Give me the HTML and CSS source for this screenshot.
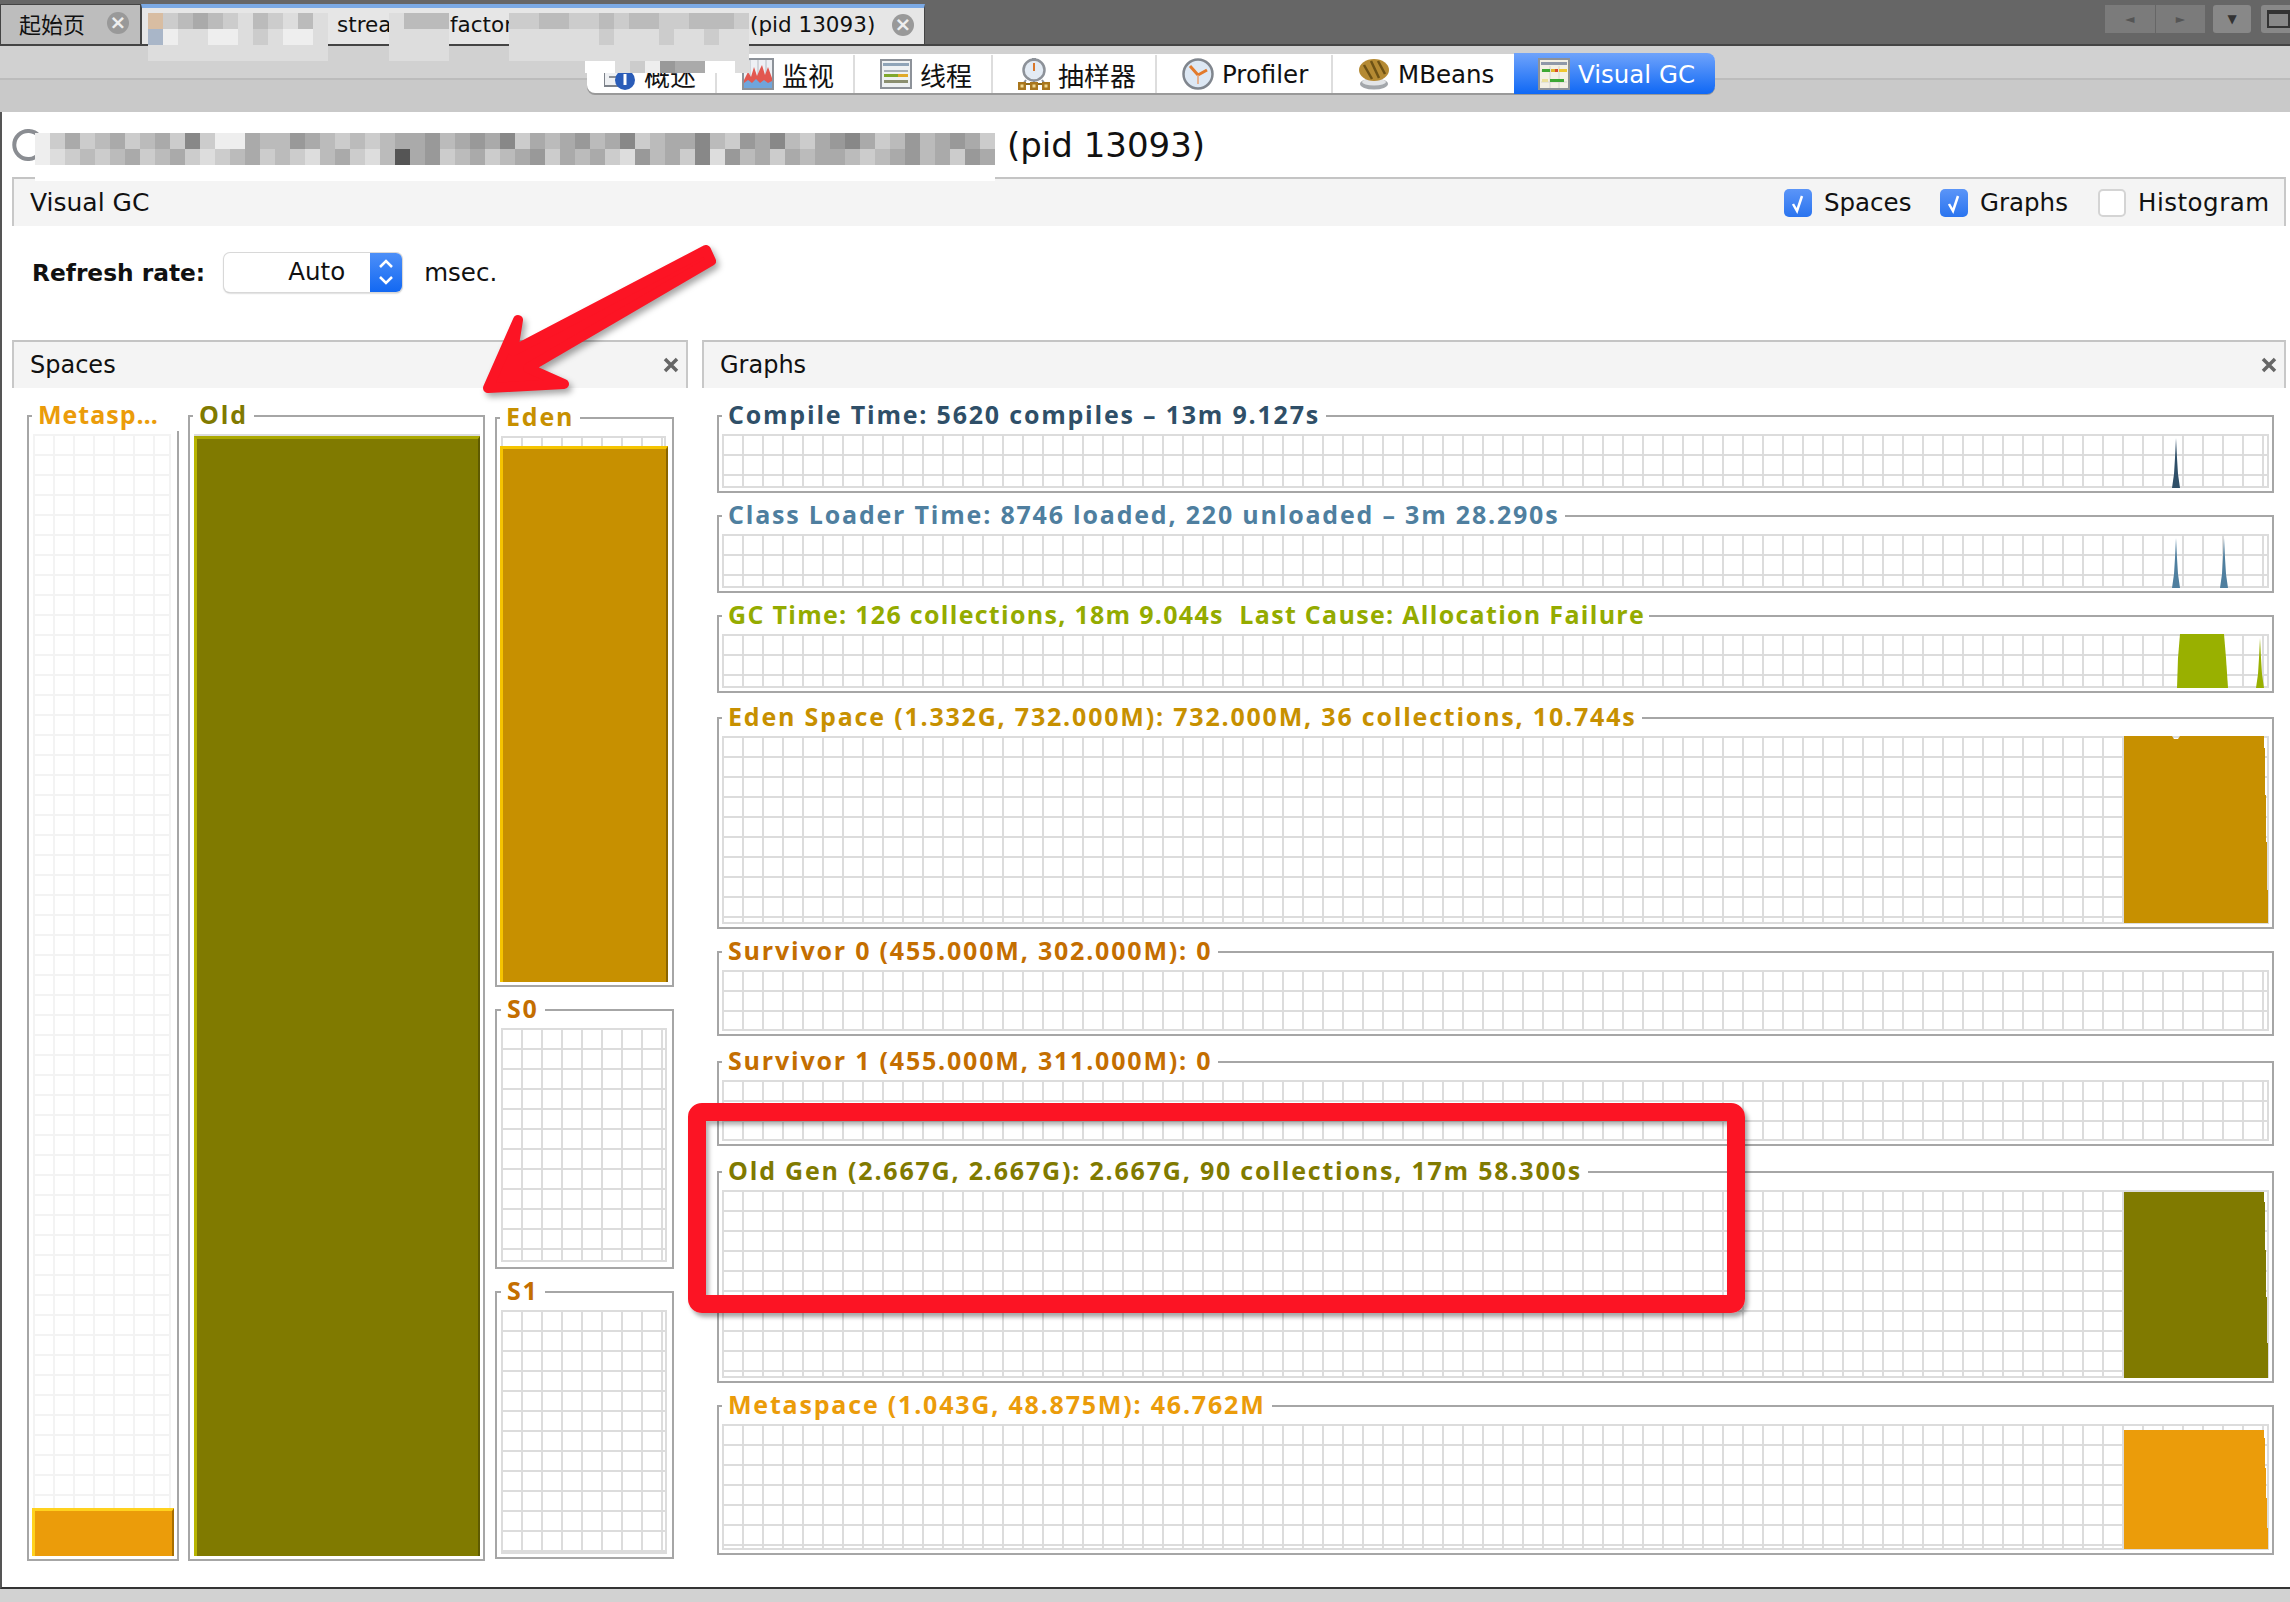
FILE: index.html
```html
<!DOCTYPE html>
<html lang="zh">
<head>
    <meta charset="UTF-8">
    <title>VisualVM - Visual GC</title>
    <link rel="stylesheet" href="styles.css">
</head>
<body>
    <!-- document tabs -->
    <div class="doc-bar">
        <div class="doc-tab">
            <span class="doc-label">起始页</span>
            <span class="doc-close">&times;</span>
        </div>
        <div class="doc-tab doc-tab-active">
            <span class="frag-stream">strea</span>
            <span class="frag-factory">factor</span>
            <span class="frag-pid">(pid 13093)</span>
            <span class="doc-close">&times;</span>
        </div>
        <div class="doc-nav">
            <div class="nav-pair">
                <span class="nav-btn">&#9668;</span>
                <span class="nav-btn">&#9658;</span>
            </div>
            <span class="nav-single">&#9660;</span>
            <span class="nav-window"><i></i></span>
        </div>
    </div>

    <!-- view tabs -->
    <div class="view-bar">
        <div class="view-tabs">
            <div class="view-tab view-tab-first">
                <svg class="tab-icon" viewBox="0 0 32 32"><rect x="0" y="3" width="24" height="25" fill="#eef0f3" stroke="#7d828a" stroke-width="2"/><rect x="5" y="18" width="9" height="2" fill="#8a8f96"/><circle cx="21" cy="22" r="10" fill="#2a5cb8"/><rect x="19.500" y="16" width="3" height="11" fill="#fff"/></svg>
                <span class="tab-cjk">概述</span>
            </div>
            <div class="view-tab">
                <svg class="tab-icon" viewBox="0 0 32 32"><rect x="1" y="1" width="30" height="30" fill="#eef0f4" stroke="#8d9299" stroke-width="2"/><path d="M8 2v28M16 2v28M24 2v28" stroke="#c8ccd2" stroke-width="1.500"/><path d="M2 22 L6 14 L9 19 L12 9 L15 18 L18 11 L20 7 L23 17 L26 9 L30 20 V30 H2Z" fill="#e2574f"/><path d="M2 30 V25 L6 22 L10 25 L14 21 L18 25 L22 22 L26 25 L30 23 V30Z" fill="#6fa5dc"/></svg>
                <span class="tab-cjk">监视</span>
            </div>
            <div class="view-tab">
                <svg class="tab-icon" viewBox="0 0 32 32"><rect x="1" y="2" width="30" height="28" fill="#eef1f3" stroke="#8d9299" stroke-width="2"/><rect x="3" y="5" width="26" height="3" fill="#8fa4b8"/><rect x="4" y="12" width="24" height="2" fill="#a9b0b8"/><rect x="4" y="16" width="14" height="3" fill="#7fa82e"/><rect x="18" y="16" width="10" height="3" fill="#e0a92a"/><rect x="4" y="22" width="24" height="3" fill="#8b8f70"/></svg>
                <span class="tab-cjk">线程</span>
            </div>
            <div class="view-tab">
                <svg class="tab-icon" viewBox="0 0 32 32"><circle cx="16" cy="12" r="10.500" fill="#e3ebf4" stroke="#8d9299" stroke-width="2.500"/><rect x="14" y="0" width="4" height="3" fill="#8d9299"/><path d="M16 5v8" stroke="#d9772b" stroke-width="2"/><path d="M5 26h22" stroke="#8a6a1f" stroke-width="2"/><path d="M8 22l-3 4M24 22l3 4M16 22v4" stroke="#8d9299" stroke-width="2"/><rect x="0" y="24" width="8" height="8" fill="#a9761c"/><rect x="12" y="24" width="8" height="8" fill="#a9761c"/><rect x="24" y="24" width="8" height="8" fill="#a9761c"/><rect x="2.500" y="26.500" width="3" height="3" fill="#f0d890"/><rect x="14.500" y="26.500" width="3" height="3" fill="#f0d890"/><rect x="26.500" y="26.500" width="3" height="3" fill="#f0d890"/></svg>
                <span class="tab-cjk">抽样器</span>
            </div>
            <div class="view-tab">
                <svg class="tab-icon" viewBox="0 0 32 32"><circle cx="16" cy="16" r="14.500" fill="#dde8f4" stroke="#80868e" stroke-width="2.500"/><path d="M16 17 L8 8 M16 17 L25 12" stroke="#e27a2c" stroke-width="3"/><path d="M16 17 V26" stroke="#e8a070" stroke-width="1.500"/></svg>
                <span>Profiler</span>
            </div>
            <div class="view-tab">
                <svg class="tab-icon" viewBox="0 0 32 32"><ellipse cx="16" cy="26" rx="14" ry="5.500" fill="#a3a7ab"/><ellipse cx="16" cy="24" rx="12" ry="3.500" fill="#e2e4e6"/><ellipse cx="16" cy="12" rx="15" ry="11" fill="#b58a33"/><path d="M6 7 L14 21 M13 3 L21 20 M20 3 L27 16" stroke="#6e5215" stroke-width="2.500"/></svg>
                <span>MBeans</span>
            </div>
            <div class="view-tab view-tab-active">
                <svg class="tab-icon" viewBox="0 0 32 32"><rect x="1" y="1" width="30" height="30" fill="#f3f0e4" stroke="#8d9299" stroke-width="2"/><rect x="3" y="4" width="26" height="3" fill="#8f98a8"/><path d="M12 8v22M21 8v22M3 13h26M3 24h26" stroke="#d6d6d0" stroke-width="1"/><rect x="4" y="11" width="8" height="3" fill="#3da834"/><rect x="13" y="11" width="4" height="3" fill="#e2b52c"/><rect x="17" y="11" width="3" height="3" fill="#d84a2a"/><rect x="21" y="11" width="8" height="3" fill="#f0c72e"/><rect x="4" y="21" width="6" height="3" fill="#eadf9a"/><rect x="12" y="21" width="14" height="3" fill="#3da834"/></svg>
                <span>Visual GC</span>
            </div>
        </div>
    </div>

    <div class="content">
        <div class="app-title">
            <svg class="spinner" viewBox="0 0 32 32"><path d="M27 7 A14 14 0 1 0 27 25" fill="none" stroke="#8a8d92" stroke-width="4"/></svg>
            <span>(pid 13093)</span>
        </div>

        <div class="options-bar">
            <span>Visual GC</span>
            <div class="options">
                <label class="option option-spaces"><span class="check check-on"><svg viewBox="0 0 28 28"><path d="M9 15l4 7 5-15" fill="none" stroke="#fff" stroke-width="2.500"/></svg></span>Spaces</label>
                <label class="option option-graphs"><span class="check check-on"><svg viewBox="0 0 28 28"><path d="M9 15l4 7 5-15" fill="none" stroke="#fff" stroke-width="2.500"/></svg></span>Graphs</label>
                <label class="option option-histogram"><span class="check"></span>Histogram</label>
            </div>
        </div>

        <div class="refresh-row">
            <b>Refresh rate:</b>
            <div class="spinner-select">
                <span class="select-value">Auto</span>
                <span class="select-arrows"><svg viewBox="0 0 32 38"><path d="M10 14l6-6 6 6M10 24l6 6 6-6" fill="none" stroke="#fff" stroke-width="2.500"/></svg></span>
            </div>
            <span>msec.</span>
        </div>

        <div class="panes">
            <section class="pane pane-spaces">
                <div class="pane-head">
                    <span>Spaces</span>
                    <svg class="pane-close" viewBox="0 0 16 16"><path d="M2 2l12 12M14 2L2 14" stroke="#666" stroke-width="3.500"/></svg>
                </div>
                <div class="spaces">
                    <fieldset class="box box-meta">
                        <legend class="c-meta legend-cut">Metasp&hellip;</legend>
                        <div class="plot plot-faint">
                            <div class="level level-meta"></div>
                        </div>
                    </fieldset>
                    <fieldset class="box box-old">
                        <legend class="c-old">Old</legend>
                        <div class="plot">
                            <div class="level level-old"></div>
                        </div>
                    </fieldset>
                    <div class="young">
                        <fieldset class="box box-eden">
                            <legend class="c-eden">Eden</legend>
                            <div class="plot">
                                <div class="level level-eden"></div>
                            </div>
                        </fieldset>
                        <fieldset class="box box-s0">
                            <legend class="c-surv">S0</legend>
                            <div class="plot"></div>
                        </fieldset>
                        <fieldset class="box box-s1">
                            <legend class="c-surv">S1</legend>
                            <div class="plot"></div>
                        </fieldset>
                    </div>
                </div>
            </section>

            <section class="pane pane-graphs">
                <div class="pane-head">
                    <span>Graphs</span>
                    <svg class="pane-close" viewBox="0 0 16 16"><path d="M2 2l12 12M14 2L2 14" stroke="#666" stroke-width="3.500"/></svg>
                </div>
                <div class="graphs">
                    <fieldset class="box graph">
                        <legend class="c-compile">Compile Time: 5620 compiles &ndash; 13m 9.127s</legend>
                        <div class="plot plot-s">
                            <svg class="trace" viewBox="0 0 1545 54"><polygon fill="#2f4f68" points="1454,4 1453,24 1452,40 1450,54 1458,54 1456,40 1455,24"/></svg>
                        </div>
                    </fieldset>
                    <fieldset class="box graph">
                        <legend class="c-class">Class Loader Time: 8746 loaded, 220 unloaded &ndash; 3m 28.290s</legend>
                        <div class="plot plot-s">
                            <svg class="trace" viewBox="0 0 1545 54"><polygon fill="#4f7f9f" points="1454,4 1453,24 1452,40 1450,54 1458,54 1456,40 1455,24"/><polygon fill="#4f7f9f" points="1502,4 1501,24 1500,40 1498,54 1506,54 1504,40 1503,24"/></svg>
                        </div>
                    </fieldset>
                    <fieldset class="box graph">
                        <legend class="c-gc legend-tight">GC Time: 126 collections, 18m 9.044s &nbsp;Last Cause: Allocation Failure</legend>
                        <div class="plot plot-s">
                            <svg class="trace" viewBox="0 0 1545 54"><polygon fill="#99b000" points="1458,0 1502,0 1504,24 1506,54 1455,54 1456,24"/><polygon fill="#99b000" points="1538,4 1537,24 1536,40 1534,54 1542,54 1540,40 1539,24"/></svg>
                        </div>
                    </fieldset>
                    <fieldset class="box graph graph-eden">
                        <legend class="c-eden">Eden Space (1.332G, 732.000M): 732.000M, 36 collections, 10.744s</legend>
                        <div class="plot plot-l">
                            <svg class="trace" viewBox="0 0 1545 188"><polygon fill="#c79000" points="1402,0 1450,0 1452,3 1456,3 1458,0 1542,0 1542,12 1543,12 1543,59 1544,59 1544,106 1545,106 1545,154 1546,154 1546,187 1402,187"/></svg>
                        </div>
                    </fieldset>
                    <fieldset class="box graph">
                        <legend class="c-surv">Survivor 0 (455.000M, 302.000M): 0</legend>
                        <div class="plot plot-m"></div>
                    </fieldset>
                    <fieldset class="box graph graph-s1">
                        <legend class="c-surv">Survivor 1 (455.000M, 311.000M): 0</legend>
                        <div class="plot plot-m"></div>
                    </fieldset>
                    <fieldset class="box graph graph-old">
                        <legend class="c-old">Old Gen (2.667G, 2.667G): 2.667G, 90 collections, 17m 58.300s</legend>
                        <div class="plot plot-l">
                            <svg class="trace" viewBox="0 0 1545 188"><polygon fill="#807a00" points="1402,2 1542,2 1542,12 1543,12 1543,60 1544,60 1544,107 1545,107 1545,153 1546,153 1546,188 1402,188"/></svg>
                        </div>
                    </fieldset>
                    <fieldset class="box graph">
                        <legend class="c-meta">Metaspace (1.043G, 48.875M): 46.762M</legend>
                        <div class="plot plot-meta">
                            <svg class="trace" viewBox="0 0 1545 126"><polygon fill="#eb9c0a" points="1402,6 1542,6 1542,14 1543,14 1543,44 1544,44 1544,74 1545,74 1545,104 1546,104 1546,125 1402,125"/></svg>
                        </div>
                    </fieldset>
                </div>
            </section>
        </div>
    </div>
    <div class="status-bar"></div>

    <!-- pixelated patches over the hidden names -->
    <div class="mosaic mosaic-icon" data-rows="Xcbabcdbcdbd|Yeddeedcdeed|dddddddddddd"></div>
    <div class="mosaic mosaic-b" data-rows="dbbb|dddd|dddd"></div>
    <div class="mosaic mosaic-c" data-rows="ccbbccbcbbccbbbc|ddddddcdddcddcdd|dddddddddddddddd"></div>
    <div class="mosaic mosaic-d" data-rows="ffdce9aaffd"></div>
    <div class="mosaic mosaic-title" data-rows="ecacbacbac8ceeabb9abcbcbaa9ba9a8caba9ba8cbaa8bc9a8bca98acb9ba9ac|edcbcbacbacdcbacbcdbacdb5a9cbacba9cabacd9bac8d9bacabaabcba9bac9a|ffffffffffffffffffffffffffffffffffffffffffffffffffffffffffffffff"></div>

    <!-- annotations drawn on top of the screenshot -->
    <svg class="note-arrow" viewBox="0 0 260 170">
        <polygon fill="#fc1424" stroke="#fc1424" stroke-width="10" stroke-linejoin="round" points="238,12 243,23 60,130 96,146 20,150 50,82 45,113"/>
    </svg>
    <div class="note-box"></div>

    <script src="mosaic.js"></script>
</body>
</html>
```

FILE: mosaic.js
```js
// Build the pixelated patches from rows of gray levels (one hex digit per cell)
document.querySelectorAll('.mosaic').forEach(function(patch) {
    patch.dataset.rows.split('|').forEach(function(row) {
        const rowEl = document.createElement('div');
        rowEl.className = 'mosaic-row';
        row.split('').forEach(function(level) {
            const cell = document.createElement('span');
            if (level === 'X') {
                cell.style.background = '#d8bda2';
            } else if (level === 'Y') {
                cell.style.background = '#a9b6c8';
            } else {
                const gray = parseInt(level, 16) * 17;
                cell.style.background = `rgb(${gray}, ${gray}, ${gray})`;
            }
            rowEl.appendChild(cell);
        });
        patch.appendChild(rowEl);
    });
});
```

FILE: styles.css
```css
* {
    box-sizing: border-box;
}

body {
    margin: 0;
    width: 2290px;
    height: 1602px;
    overflow: hidden;
    background-color: #d2d2d2;
    font-family: 'DejaVu Sans', 'Noto Sans CJK SC', sans-serif;
    color: #111;
}

/* document tabs */
.doc-bar {
    display: flex;
    height: 46px;
    padding-top: 4px;
    background-color: #666;
    border-bottom: 2px solid #444;
    font-size: 21.500px;
}

.doc-tab {
    display: flex;
    align-items: center;
    width: 141px;
    height: 40px;
    padding: 0 0 3px 18px;
    background-color: #bdbdbd;
    border: 1px solid #444;
    border-bottom: none;
}

.doc-label {
    width: 88px;
    font-size: 22px;
}

.doc-close {
    width: 22px;
    height: 22px;
    border-radius: 50%;
    background-color: #999;
    color: #eee;
    font-size: 20px;
    font-weight: bold;
    line-height: 21px;
    text-align: center;
}

.doc-tab-active {
    position: relative;
    width: 784px;
    padding-left: 0;
    background-color: #e6e6e6;
    border-top: 4px solid #7ba9e4;
}

.frag-stream {
    margin-left: 195px;
    width: 113px;
}

.frag-factory {
    width: 300px;
}

.frag-pid {
    width: 142px;
}

.doc-nav {
    display: flex;
    gap: 8px;
    margin-left: auto;
    align-items: flex-start;
    padding-top: 1px;
}

.nav-pair {
    display: flex;
    width: 100px;
    height: 28px;
    gap: 1px;
}

.nav-btn,
.nav-single {
    flex: 1;
    height: 28px;
    background-color: #7b7b7b;
    color: #555;
    font-size: 12px;
    line-height: 28px;
    text-align: center;
}

.nav-single {
    flex: none;
    width: 38px;
    border-radius: 3px;
    background-color: #888;
    color: #333;
}

.nav-window {
    width: 29px;
    height: 28px;
    margin-left: 2px;
    padding: 5px 0 0 6px;
    background-color: #888;
    border-radius: 3px 0 0 3px;
}

.nav-window i {
    display: block;
    width: 23px;
    height: 18px;
    border: 2px solid #333;
    border-top-width: 4px;
}

/* view tabs */
.view-bar {
    height: 66px;
    padding: 8px 0 0 587px;
    background: linear-gradient(#d1d1d1 0, #d1d1d1 32px, #bcbcbc 32px, #bcbcbc 34px, #c9c9c9 34px);
}

.view-tabs {
    display: flex;
    height: 39px;
    padding-top: 1px;
    font-size: 24.500px;
    background-color: #fff;
    width: 1128px;
    border-radius: 0 8px 8px 8px;
    box-shadow: 0 2px 0 #999;
}

.view-tab {
    display: flex;
    flex: none;
    align-items: center;
    gap: 8px;
    padding: 0 0 0 25px;
    border-right: 2px solid #ddd;
}

.view-tab:nth-child(2),
.view-tab:nth-child(3) {
    width: 138px;
}

.view-tab:nth-child(4) {
    width: 164px;
}

.view-tab:nth-child(5) {
    width: 176px;
}

.view-tab:nth-child(6) {
    width: 181px;
    border-right: none;
}

.view-tab-first {
    width: 130px;
    padding-left: 17px;
    border-radius: 0 0 0 8px;
}

.view-tab-active {
    flex: 1;
    margin-top: -2px;
    padding: 1px 0 0 24px;
    height: 41px;
    border-right: none;
    border-radius: 0 8px 8px 0;
    background: linear-gradient(#6fa3fb, #0f68f5);
    color: #fff;
}

.tab-cjk {
    font-size: 26px;
}

.tab-icon {
    flex: none;
    width: 32px;
    height: 32px;
}

/* main panel */
.content {
    height: 1477px;
    padding-left: 10px;
    background-color: #fff;
    border-left: 2px solid #555;
    border-bottom: 2px solid #333;
}

.app-title {
    display: flex;
    align-items: center;
    height: 65px;
    font-size: 34px;
}

.spinner {
    width: 32px;
    height: 32px;
    margin-right: 963px;
}

.options-bar {
    display: flex;
    justify-content: space-between;
    align-items: center;
    width: 2274px;
    height: 49px;
    padding: 0 0 0 16px;
    background-color: #f4f4f4;
    border-top: 2px solid #c4c4c4;
    border-left: 2px solid #c8c8c8;
    border-right: 2px solid #c8c8c8;
    font-size: 25px;
}

.options {
    display: flex;
    font-size: 24.500px;
}

.option {
    display: flex;
    align-items: center;
    gap: 12px;
}

.option-spaces {
    width: 156px;
}

.option-graphs {
    width: 158px;
}

.option-histogram {
    width: 186px;
    letter-spacing: 0.500px;
}

.check {
    width: 28px;
    height: 28px;
    background-color: #fff;
    border: 2px solid #d4d4d4;
    border-radius: 5px;
}

.check-on {
    border: none;
    background: linear-gradient(#5b95f8, #2a74ef);
}

.check svg {
    display: block;
}

.refresh-row {
    display: flex;
    align-items: center;
    height: 114px;
    padding: 0 0 22px 20px;
    font-size: 24.500px;
}

.refresh-row b {
    font-size: 23.300px;
}

.spinner-select {
    display: flex;
    width: 178px;
    height: 39px;
    margin: 0 22px 0 19px;
    background-color: #fff;
    border-radius: 6px;
    box-shadow: 0 0 0 1px #d8d8d8, 0 1px 2px #999;
}

.select-value {
    width: 146px;
    padding-right: 25px;
    line-height: 38px;
    text-align: right;
}

.select-arrows {
    width: 32px;
    background: linear-gradient(#4d8ff8, #1268f2);
    border-radius: 0 6px 6px 0;
}

.select-arrows svg {
    display: block;
}

.panes {
    display: flex;
    gap: 14px;
}

.pane-spaces {
    width: 676px;
}

.pane-graphs {
    width: 1584px;
}

.pane-head {
    display: flex;
    justify-content: space-between;
    align-items: center;
    height: 48px;
    padding: 0 7px 0 16px;
    background-color: #f4f4f4;
    border-top: 2px solid #c4c4c4;
    border-left: 2px solid #c8c8c8;
    border-right: 2px solid #c8c8c8;
    font-size: 24px;
}

.pane-close {
    width: 16px;
    height: 16px;
}

/* titled boxes, both panes use the same frame */
.box {
    min-width: 0;
    margin: 0;
    padding: 3px;
    border: 2px solid #a6a6a6;
}

.box legend {
    margin-left: 0;
    padding: 0 6px;
    height: 30px;
    font-family: 'Open Sans', sans-serif;
    font-size: 25px;
    font-weight: bold;
    line-height: 27px;
    letter-spacing: 1.800px;
    white-space: nowrap;
}

.box legend.legend-cut {
    padding-right: 24px;
    letter-spacing: 1px;
}

.box legend.legend-tight {
    padding-right: 4px;
    letter-spacing: 1.300px;
}

.c-compile { color: #2f4f68; }
.c-class { color: #4f7f9f; }
.c-gc { color: #94ab00; }
.c-eden { color: #c79000; }
.c-surv { color: #c46e00; }
.c-old { color: #807a00; }
.c-meta { color: #eb9c0a; }

.plot {
    position: relative;
    background-color: #fff;
    background-image:
        linear-gradient(#dcdcdc 2px, transparent 2px),
        linear-gradient(90deg, #dcdcdc 2px, transparent 2px);
    background-size: 20px 20px;
    border-right: 2px solid #dcdcdc;
    border-bottom: 2px solid #dcdcdc;
}

.plot-faint {
    background-image:
        linear-gradient(#f3f3f3 2px, transparent 2px),
        linear-gradient(90deg, #f3f3f3 2px, transparent 2px);
    border-color: #f3f3f3;
}

.plot-s { height: 54px; }
.plot-m { height: 61px; }
.plot-l { height: 188px; }
.plot-meta { height: 126px; }

.trace {
    display: block;
    position: absolute;
    top: 0;
    left: 0;
    width: 1545px;
    height: calc(100% + 2px);
    overflow: visible;
}

.spaces {
    display: flex;
    gap: 9px;
    padding: 13px 0 0 15px;
}

.box-meta {
    width: 152px;
    height: 1160px;
}

.box-old {
    width: 297px;
    height: 1160px;
}

.young {
    display: flex;
    flex-direction: column;
    gap: 8px;
    width: 179px;
    margin: 2px 0 0 1px;
}

.box-eden { height: 584px; }
.box-s0 { height: 274px; padding: 3px 5px 5px 4px; }
.box-s1 { height: 282px; padding: 3px 5px 5px 4px; }

.box-meta .plot { margin-left: 1px; margin-right: 3px; height: 1122px; }
.box-old .plot { height: 1122px; margin-left: 1px; }
.box-eden .plot { margin: 0 3px 0 1px; height: 546px; }
.box-s0 .plot { height: 234px; }
.box-s1 .plot { height: 244px; }

/* filled part of a space, anchored to the bottom of its grid */
.level {
    position: absolute;
    bottom: -2px;
    border-style: solid;
}

.level-meta {
    left: -1px;
    right: -5px;
    height: 48px;
    background-color: #eb9c0a;
    border-width: 3px 2px 0 3px;
    border-color: #ffd21e #a86f00 transparent #ffd21e;
}

.level-old {
    left: 0;
    right: -2px;
    height: 1120px;
    background-color: #807a00;
    border-width: 3px 2px 0 3px;
    border-color: #aaa800 #5e5a00 transparent #b8b400;
}

.level-eden {
    left: -1px;
    right: -4px;
    height: 536px;
    background-color: #c79000;
    border-width: 3px 2px 0 3px;
    border-color: #f5c400 #8a6500 transparent #f5c400;
}

.graphs {
    display: flex;
    flex-direction: column;
    gap: 8px;
    padding: 13px 0 0 15px;
    width: 1572px;
}

.graph {
    width: 1557px;
}

.graph-eden { margin-top: 2px; }
.graph-s1 { margin-top: 3px; }
.graph-old { margin-top: 3px; }

/* pixelated patches */
.mosaic {
    position: absolute;
}

.mosaic-row {
    display: flex;
}

.mosaic-row span {
    flex: none;
    width: 15px;
    height: 16px;
}

.mosaic-icon { left: 148px; top: 13px; }
.mosaic-b { left: 389px; top: 13px; }
.mosaic-c { left: 509px; top: 13px; }
.mosaic-d { left: 585px; top: 61px; }
.mosaic-d .mosaic-row span { height: 12px; }
.mosaic-title { left: 35px; top: 133px; }

/* annotations */
.note-arrow {
    position: absolute;
    left: 468px;
    top: 238px;
    width: 260px;
    height: 170px;
    filter: drop-shadow(3px 4px 3px rgba(0, 0, 0, 0.35));
}

.note-box {
    position: absolute;
    left: 688px;
    top: 1103px;
    width: 1057px;
    height: 210px;
    border: 18px solid #fc1424;
    border-radius: 14px;
    box-shadow: 3px 4px 4px rgba(0, 0, 0, 0.35), inset 3px 4px 4px rgba(0, 0, 0, 0.3);
}

.status-bar {
    height: 13px;
    background-color: #d2d2d2;
}
```
